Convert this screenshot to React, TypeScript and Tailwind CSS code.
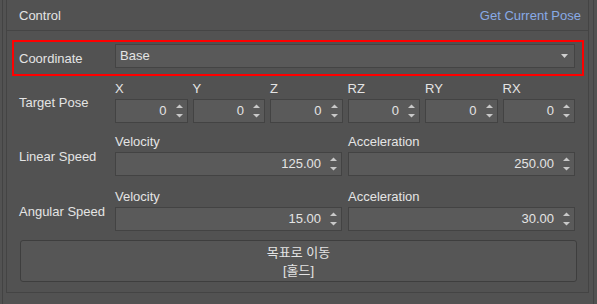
import React from "react";

const axes = ["X", "Y", "Z", "RZ", "RY", "RX"];

function Arrows() {
  return (
    <svg width="7" height="14" viewBox="0 0 7 14" className="shrink-0">
      <polygon points="0,4 3.5,0.5 7,4" fill="#c9c9c9" />
      <polygon points="0,10 7,10 3.5,13.5" fill="#c9c9c9" />
    </svg>
  );
}

function SpinBox({ value }: { value: string }) {
  return (
    <div className="h-[24px] border border-[#434343] bg-[#5a5a5a] flex items-center justify-end pr-[4px]">
      <span className="leading-[16px]">{value}</span>
      <span className="ml-[9px] flex items-center">
        <Arrows />
      </span>
    </div>
  );
}

function SpeedRow({ label, velocity, accel }: { label: string; velocity: string; accel: string }) {
  return (
    <div className="flex pl-[12px]">
      <div className="w-[96px] flex items-center pt-[3px]">{label}</div>
      <div className="w-[460px] grid grid-cols-2 gap-[6px]">
        <div className="flex flex-col">
          <div className="h-[16px] leading-[16px] mb-[2px]">Velocity</div>
          <SpinBox value={velocity} />
        </div>
        <div className="flex flex-col">
          <div className="h-[16px] leading-[16px] mb-[2px]">Acceleration</div>
          <SpinBox value={accel} />
        </div>
      </div>
    </div>
  );
}

export default function App() {
  return (
    <div className="w-[597px] h-[304px] overflow-hidden bg-[#525252] text-[13px] text-[#e4e4e4] font-['Liberation_Sans','Noto_Sans_CJK_KR',sans-serif]">
      <div className="ml-[2px] w-[592px] h-[304px] border-x border-[#434343] pl-[3px] pr-[4px]">
        <div className="h-[293px] border-x border-b border-[#444444] flex flex-col">
          {/* header */}
          <div className="h-[31px] shrink-0 border-b border-[#454545] flex items-center justify-between pl-[12px] pr-[7px] pt-[2px]">
            <span>Control</span>
            <span className="text-[#88aae6]">Get Current Pose</span>
          </div>

          {/* coordinate */}
          <div className="mt-[9px] ml-[5px] mr-[4px] h-[36px] border-2 border-[#ff0000] flex items-center pl-[5px] pr-[7px]">
            <div className="w-[96px] pt-[1px]">Coordinate</div>
            <div className="self-start mt-[2px] w-[460px] h-[24px] border border-[#444444] bg-[#595959] flex items-center justify-between pl-[4px] pr-[6px]">
              <span>Base</span>
              <svg width="7" height="4" viewBox="0 0 7 4">
                <polygon points="0,0 7,0 3.5,4" fill="#d0d0d0" />
              </svg>
            </div>
          </div>

          {/* target pose */}
          <div className="mt-[5px] flex pl-[12px]">
            <div className="w-[96px] flex items-center pt-[2px]">Target Pose</div>
            <div className="w-[460px] grid grid-cols-6 gap-[5px]">
              {axes.map((a) => (
                <div key={a} className="flex flex-col">
                  <div className="h-[16px] leading-[16px] mb-[2px]">{a}</div>
                  <SpinBox value="0" />
                </div>
              ))}
            </div>
          </div>

          <div className="mt-[11px]">
            <SpeedRow label="Linear Speed" velocity="125.00" accel="250.00" />
          </div>
          <div className="mt-[13px]">
            <SpeedRow label="Angular Speed" velocity="15.00" accel="30.00" />
          </div>

          <button className="mt-[9px] ml-[13px] w-[557px] h-[42px] shrink-0 rounded-[3px] border border-[#3e3e3e] bg-[#565656] flex flex-col items-center justify-center leading-[18px] pt-[1px] text-[#e4e4e4]">
            <span>목표로 이동</span>
            <span>[홀드]</span>
          </button>
        </div>
      </div>
    </div>
  );
}
